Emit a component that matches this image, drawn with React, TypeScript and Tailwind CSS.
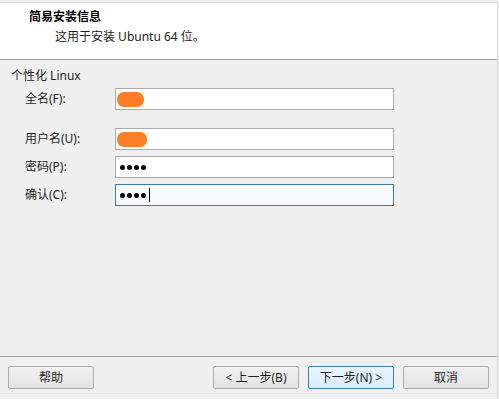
const FONT = "font-['Noto_Sans','Noto_Sans_CJK_SC',sans-serif]";

function Field({ label, children, focused }: { label: string; children?: React.ReactNode; focused?: boolean }) {
  return (
    <div className="flex items-center">
      <div className="w-[115px] pl-[25px] text-[12px] text-[#1e1e1e]">{label}</div>
      <div
        className={`relative flex h-[22px] w-[279px] items-center border px-[4px] ${
          focused ? "border-[#3d7bad] bg-[#f7fbff]" : "border-[#ababab] bg-white"
        }`}
      >
        {children}
      </div>
    </div>
  );
}

function Blob({ w }: { w: string }) {
  return <div className={`${w} h-[15px] -ml-[3px] rounded-[7px] bg-[#ff7f27] blur-[0.5px]`} />;
}

function Dots({ caret }: { caret?: boolean }) {
  return (
    <div className="flex items-center gap-[2px]">
      {[0, 1, 2, 3].map((i) => (
        <span key={i} className="h-[5px] w-[5px] rounded-full bg-black" />
      ))}
      {caret && <span className="ml-[1px] h-[14px] w-[1px] bg-black" />}
    </div>
  );
}

function Btn({ children, primary }: { children: React.ReactNode; primary?: boolean }) {
  return (
    <button
      className={`flex h-[23px] w-[86px] items-center justify-center rounded-[2px] border text-[12px] text-[#1e1e1e] ${
        primary
          ? "border-[#3c7fb1] bg-gradient-to-b from-[#eaf4fc] to-[#dcecfc]"
          : "border-[#acacac] bg-gradient-to-b from-[#f2f2f2] to-[#e3e3e3]"
      }`}
    >
      {children}
    </button>
  );
}

export default function App() {
  return (
    <div className={`${FONT} flex h-[399px] w-[499px] flex-col bg-[#f0f0f0] pt-[2px]`}>
      <div className="flex h-full w-[498px] flex-col border-r border-[#dadada]">
        {/* Header */}
        <div className="h-[58px] border-t border-b border-t-[#d5d5d5] border-b-[#a0a0a0] bg-white pl-[29px] pt-[6px]">
          <div className="text-[12px] font-bold leading-[16px] text-black">简易安装信息</div>
          <div className="mt-[4px] pl-[26px] text-[12px] leading-[16px] text-[#1e1e1e]">这用于安装 Ubuntu 64 位。</div>
        </div>

        {/* Body */}
        <div className="flex flex-1 flex-col">
          <div className="pl-[11px] pt-[8px] text-[12px] leading-[16px] text-[#1e1e1e]">个性化 Linux</div>
          <div className="mt-[4px]">
            <Field label="全名(F):">
              <Blob w="w-[27px]" />
            </Field>
          </div>
          <div className="mt-[18px] flex flex-col gap-[6px]">
            <Field label="用户名(U):">
              <Blob w="w-[30px]" />
            </Field>
            <Field label="密码(P):">
              <Dots />
            </Field>
            <Field label="确认(C):" focused>
              <Dots caret />
            </Field>
          </div>
        </div>

        {/* Footer */}
        <div className="h-[43px] border-t border-[#a0a0a0]">
          <div className="flex items-center px-[8px] pt-[9px]">
            <Btn>帮助</Btn>
            <div className="flex-1" />
            <div className="flex gap-[9px]">
              <Btn>&lt; 上一步(B)</Btn>
              <Btn primary>下一步(N) &gt;</Btn>
              <Btn>取消</Btn>
            </div>
          </div>
          <div className="mt-[4px] h-[1px] bg-[#e3e3e3]" />
        </div>
      </div>
    </div>
  );
}
